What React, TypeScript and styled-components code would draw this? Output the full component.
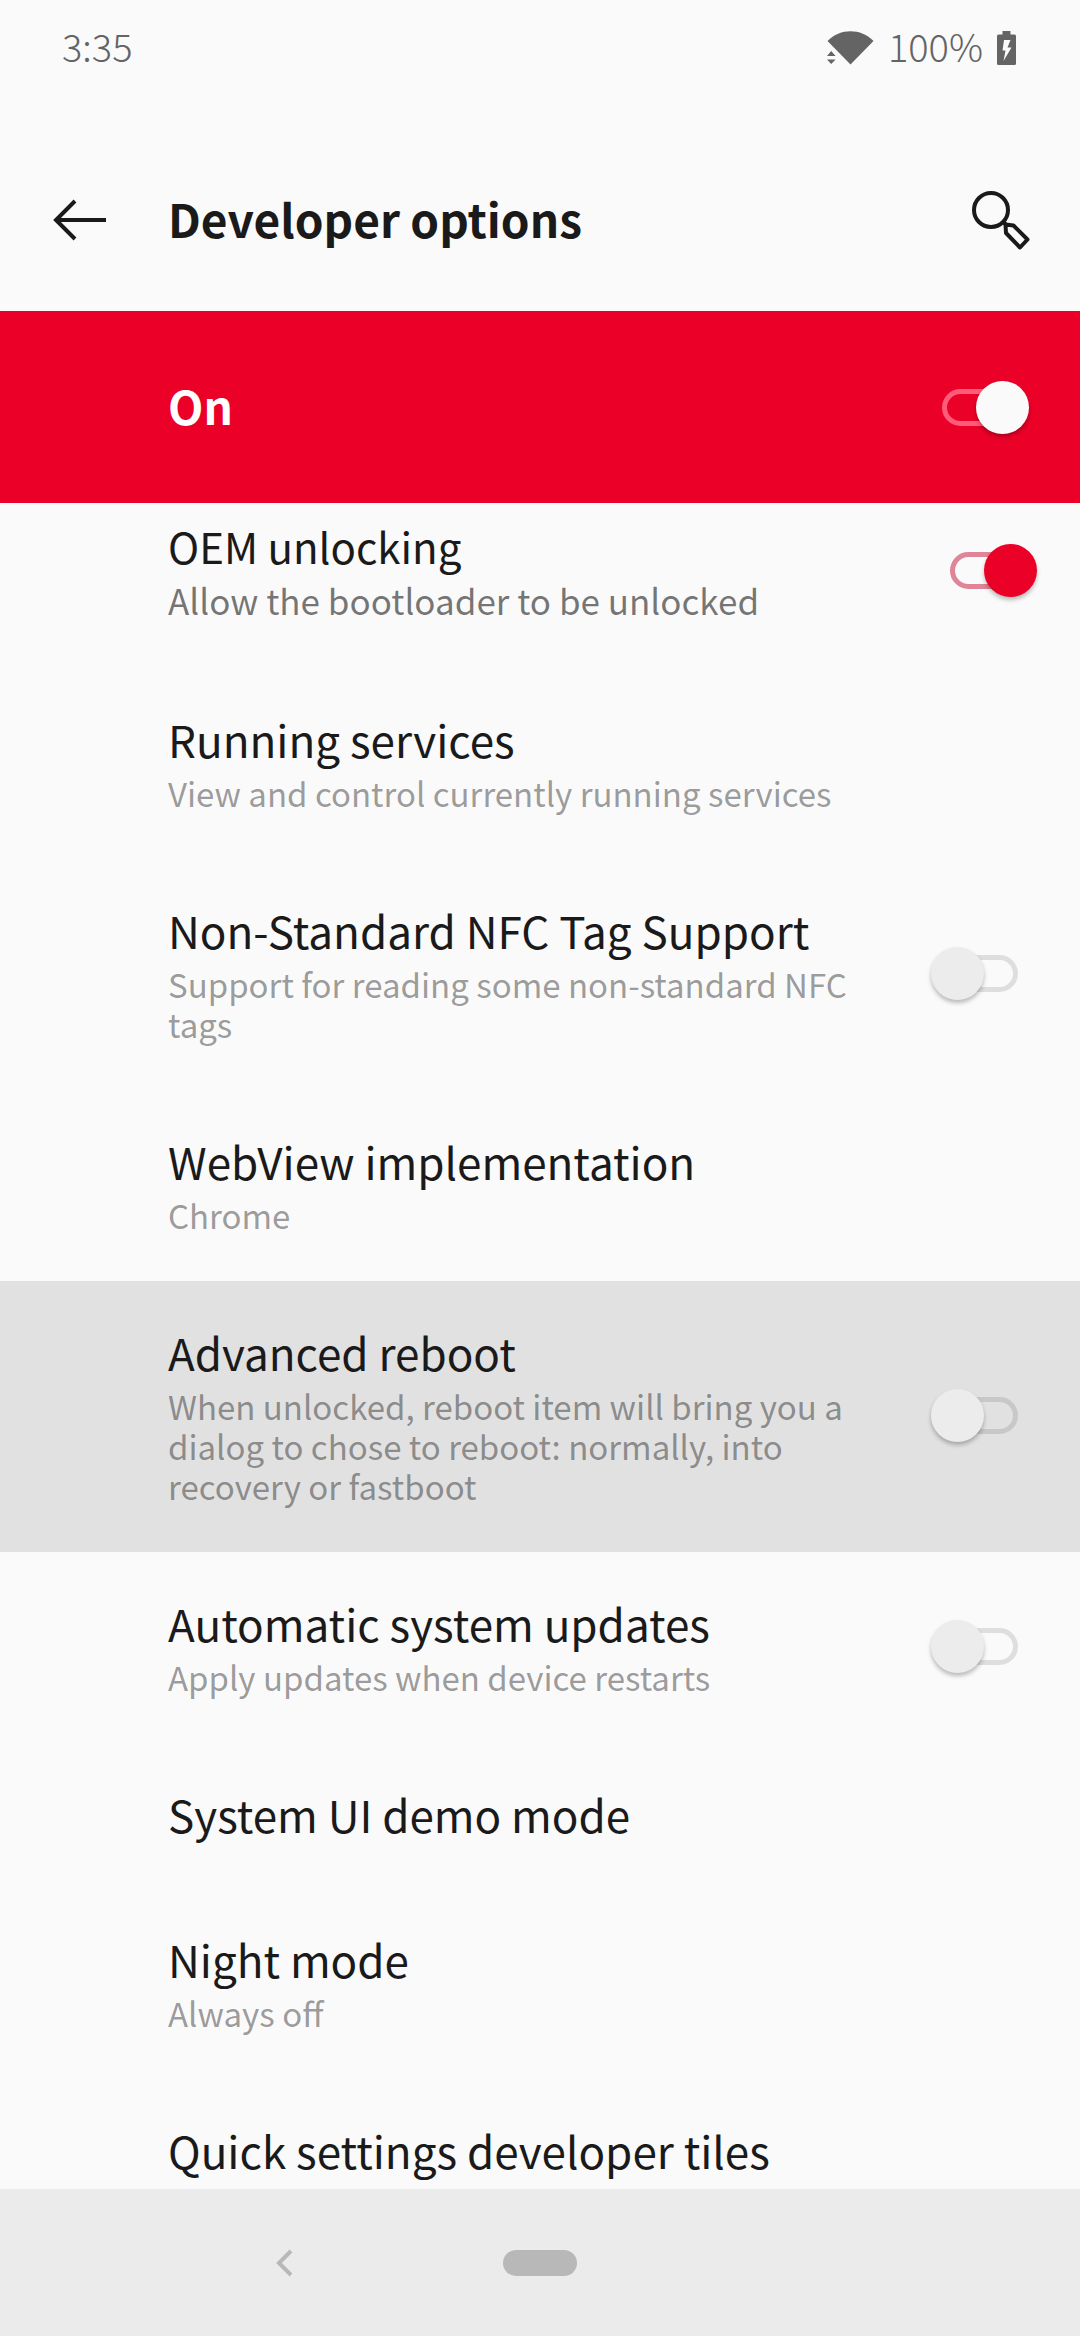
import React, { useState } from 'react';
import styled, { createGlobalStyle } from 'styled-components';

const GlobalStyle = createGlobalStyle`
  *, *::before, *::after { box-sizing: border-box; }
  body {
    margin: 0;
    background: #fafafa;
    color: #1a1a1a;
    font-family: "Noto Sans CJK SC", "Noto Sans", sans-serif;
  }
`;

const Screen = styled.div`
  display: flex;
  flex-direction: column;
  height: 100vh;
  overflow: hidden;
`;

const StatusBar = styled.div`
  display: flex;
  align-items: center;
  justify-content: space-between;
  flex: none;
  height: 96px;
  padding: 0 64px 0 62px;
  color: #646464;
`;

const StatusText = styled.span`
  padding-bottom: 4px;
  font-size: 38px;
  font-weight: 300;
  line-height: 48px;
`;

const StatusIcons = styled.div`
  display: flex;
  align-items: center;
  gap: 14px;
`;

const StatusIcon = styled.svg`
  display: block;
  fill: currentColor;
`;

const AppBar = styled.header`
  display: flex;
  align-items: center;
  flex: none;
  height: 183px;
  margin-top: 32px;
  padding: 0 48px;
`;

const IconButton = styled.button`
  display: flex;
  align-items: center;
  justify-content: center;
  flex: none;
  width: 64px;
  height: 64px;
  padding: 0;
  border: 0;
  background: none;
  color: #1a1a1a;
`;

const Title = styled.h1`
  flex: 1;
  margin: 0 56px;
  padding-bottom: 4px;
  font-size: 46px;
  font-weight: 700;
  line-height: 64px;
`;

const Banner = styled.label`
  display: flex;
  align-items: center;
  justify-content: space-between;
  flex: none;
  height: 192px;
  padding: 0 51px 0 168px;
  background: #eb0028;
  color: #fff;
`;

const BannerText = styled.span`
  padding-bottom: 4px;
  font-size: 46px;
  font-weight: 700;
  line-height: 64px;
`;

const Settings = styled.main`
  flex: 1;
  min-height: 0;
  overflow: hidden;
`;

/* The list rests scrolled a little way under the banner. */
const List = styled.ul`
  list-style: none;
  margin: -28px 0 0;
  padding: 0;
`;

const Row = styled.div<{ $pressed?: boolean; $wide?: boolean }>`
  display: flex;
  align-items: center;
  gap: 60px;
  width: 100%;
  padding: 44px ${(p) => (p.$wide ? 43 : 62)}px 46px 168px;
  border: 0;
  background: ${(p) => (p.$pressed ? '#e1e1e1' : 'transparent')};
  color: inherit;
  font: inherit;
  text-align: left;
`;

const RowText = styled.span`
  display: flex;
  flex-direction: column;
  flex: 1;
  gap: 6px;
  min-width: 0;
`;

const RowTitle = styled.span<{ $compact?: boolean }>`
  font-size: ${(p) => (p.$compact ? 42 : 44)}px;
  line-height: ${(p) => (p.$compact ? 53 : 55)}px;
`;

const Summary = styled.span<{ $large?: boolean }>`
  color: ${(p) => (p.$large ? 'rgba(0, 0, 0, 0.54)' : 'rgba(0, 0, 0, 0.4)')};
  font-size: ${(p) => (p.$large ? 35 : 33)}px;
  line-height: ${(p) => (p.$large ? 44 : 40)}px;
`;

const Switch = styled.input<{ $thumb?: string; $track?: string }>`
  appearance: none;
  display: grid;
  align-items: center;
  flex: none;
  width: 87px;
  height: 53px;
  margin: 0;

  &::before,
  &::after {
    content: '';
    grid-area: 1 / 1;
  }

  &::before {
    justify-self: end;
    width: 70px;
    height: 37px;
    border: 5px solid rgba(0, 0, 0, 0.11);
    border-radius: 19px;
  }

  &::after {
    justify-self: start;
    width: 53px;
    height: 53px;
    border-radius: 50%;
    background: #ececec;
    box-shadow: 0 3px 4px rgba(0, 0, 0, 0.26);
  }

  &:checked::before {
    justify-self: start;
    border-color: ${(p) => p.$track ?? '#e08597'};
  }

  &:checked::after {
    justify-self: end;
    background: ${(p) => p.$thumb ?? '#eb0028'};
  }
`;

const NavBar = styled.nav`
  display: grid;
  grid-template-columns: 1fr 74px 1fr;
  align-items: center;
  flex: none;
  height: 147px;
  background: #ebebeb;
`;

const NavBack = styled(IconButton)`
  justify-self: center;
  margin-left: 64px;
  color: #b8b8b8;
`;

const HomePill = styled.button`
  height: 26px;
  padding: 0;
  border: 0;
  border-radius: 13px;
  background: #b8b8b8;
`;

type Item = {
  title: string;
  summary?: string;
  on?: boolean;
  pressed?: boolean;
  admin?: boolean;
};

const items: Item[] = [
  { title: 'OEM unlocking', summary: 'Allow the bootloader to be unlocked', on: true, admin: true },
  { title: 'Running services', summary: 'View and control currently running services' },
  { title: 'Non-Standard NFC Tag Support', summary: 'Support for reading some non-standard NFC tags', on: false },
  { title: 'WebView implementation', summary: 'Chrome' },
  {
    title: 'Advanced reboot',
    summary: 'When unlocked, reboot item will bring you a dialog to chose to reboot: normally, into recovery or fastboot',
    on: false,
    pressed: true,
  },
  { title: 'Automatic system updates', summary: 'Apply updates when device restarts', on: false },
  { title: 'System UI demo mode' },
  { title: 'Night mode', summary: 'Always off' },
  { title: 'Quick settings developer tiles' },
];

function SettingRow({ item }: { item: Item }) {
  const [on, setOn] = useState(!!item.on);
  const hasSwitch = item.on !== undefined;
  return (
    <Row as={hasSwitch ? 'label' : 'button'} $pressed={item.pressed} $wide={item.admin}>
      <RowText>
        <RowTitle $compact={item.admin}>{item.title}</RowTitle>
        {item.summary && <Summary $large={item.admin}>{item.summary}</Summary>}
      </RowText>
      {hasSwitch && (
        <Switch type="checkbox" role="switch" checked={on} onChange={(e) => setOn(e.target.checked)} />
      )}
    </Row>
  );
}

export default function App() {
  const [enabled, setEnabled] = useState(true);
  return (
    <>
      <GlobalStyle />
      <Screen>
        <StatusBar>
          <StatusText>3:35</StatusText>
          <StatusIcons>
            <StatusIcon width="47" height="34" viewBox="0 0 47 34" aria-hidden="true">
              <path d="M0.5 10C13-3 34-3 46.5 10L23.5 33.5Z" />
              <path d="M4.2 20L8.6 25H0Z M0 28.4H8.6L4.2 33Z" />
            </StatusIcon>
            <StatusIcons>
              <StatusText>100%</StatusText>
              <StatusIcon width="19" height="34" viewBox="0 0 19 34" aria-hidden="true">
                <path
                  fillRule="evenodd"
                  d="M5.5 0H13.5V3.5H17.5Q19 3.5 19 5V32.5Q19 34 17.5 34H1.5Q0 34 0 32.5V5Q0 3.5 1.5 3.5H5.5Z M7 9L5.5 19.5H8.5L6.5 30L14.5 16.5H10.5L13.5 9Z"
                />
              </StatusIcon>
            </StatusIcons>
          </StatusIcons>
        </StatusBar>

        <AppBar>
          <IconButton aria-label="Back">
            <svg width="54" height="42" viewBox="0 0 54 42" fill="none" stroke="currentColor" strokeWidth="4">
              <path d="M22 2L3 21L22 40M3 21H53" />
            </svg>
          </IconButton>
          <Title>Developer options</Title>
          <IconButton aria-label="Search">
            <svg width="60" height="60" viewBox="0 0 60 60" fill="none" stroke="currentColor" strokeWidth="4">
              <circle cx="21" cy="20" r="17" />
              <path d="M33 32L36 34.5" />
              <path d="M35.5 34.5L43.5 35.5L57.5 49.500L50 57.5L36 43Z" strokeLinejoin="round" />
            </svg>
          </IconButton>
        </AppBar>

        <Banner>
          <BannerText>On</BannerText>
          <Switch
            type="checkbox"
            role="switch"
            checked={enabled}
            onChange={(e) => setEnabled(e.target.checked)}
            $thumb="#fafafa"
            $track="#ff5c7a"
          />
        </Banner>

        <Settings>
          <List>
            {items.map((item) => (
              <li key={item.title}>
                <SettingRow item={item} />
              </li>
            ))}
          </List>
        </Settings>

        <NavBar>
          <NavBack aria-label="Back">
            <svg width="20" height="28" viewBox="0 0 20 28" fill="none" stroke="currentColor" strokeWidth="4">
              <path d="M17 2L5 14L17 26" />
            </svg>
          </NavBack>
          <HomePill aria-label="Home" />
        </NavBar>
      </Screen>
    </>
  );
}
